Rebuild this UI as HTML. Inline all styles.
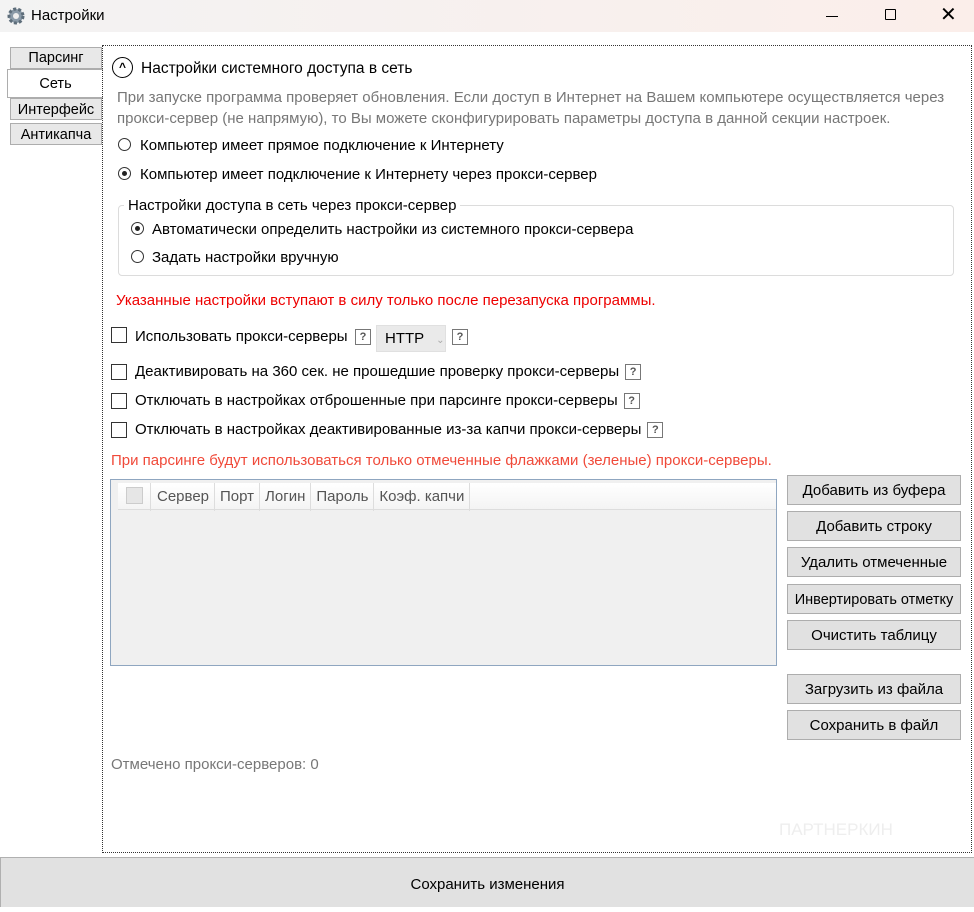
<!DOCTYPE html>
<html><head><meta charset="utf-8"><style>
*{box-sizing:border-box;margin:0;padding:0}
body{width:974px;height:907px;position:relative;background:#fff;font-family:"Liberation Sans","DejaVu Sans",sans-serif;font-size:15px;color:#000;overflow:hidden}
.a{position:absolute;white-space:nowrap}
.title{left:0;top:0;width:974px;height:32px;background:linear-gradient(90deg,#f3f3f3,#fbeeea)}
.tab{position:absolute;left:10px;width:92px;height:22px;border:1px solid #adadad;background:#e8e8e8;text-align:center;line-height:20px;font-size:14.5px}
.frame{left:102px;top:45px;width:870px;height:808px;border:1px dotted #333}
.rad{position:absolute;width:13px;height:13px;border:1px solid #333;border-radius:50%;background:#fff}
.rad.on::after{content:"";position:absolute;left:3px;top:3px;width:5px;height:5px;border-radius:50%;background:#222}
.cb{position:absolute;width:16px;height:16px;border:1px solid #333;background:#fff}
.q{display:inline-block;vertical-align:middle;margin-left:6px;width:16px;height:16px;border:1px solid #777;font-size:11px;font-weight:bold;color:#555;text-align:center;line-height:14px}
.btn{position:absolute;left:787px;width:174px;height:30px;border:1px solid #adadad;background:#e1e1e1;text-align:center;line-height:30px;font-size:15px}
.gray{color:#777}
.red{color:#e00}
</style></head><body>
<div class="a title"></div>
<svg class="a" style="left:6px;top:6px" width="20" height="20" viewBox="0 0 20 20"><circle cx="10" cy="10" r="7" fill="#8a9aa8" stroke="#5d6d7a" stroke-width="3" stroke-dasharray="3 2"/><circle cx="10" cy="10" r="3" fill="#eee"/></svg>
<div class="a" style="left:31px;top:7px;font-size:15px">Настройки</div>
<div class="a" style="left:826px;top:16px;width:12px;height:1px;background:#000"></div>
<div class="a" style="left:885px;top:9px;width:11px;height:11px;border:1.5px solid #000;border-radius:1px"></div>
<div class="a" style="left:940px;top:2px;font-size:20px">✕</div>

<div class="tab" style="top:47px">Парсинг</div>
<div class="tab" style="top:69px;left:7px;width:96px;height:29px;background:#fff;line-height:29px;border-right:none">Сеть</div>
<div class="tab" style="top:98px;line-height:22px">Интерфейс</div>
<div class="tab" style="top:123px;line-height:22px">Антикапча</div>
<div class="a frame"></div>

<div class="a" style="left:112px;top:57px;width:21px;height:21px;border:1.5px solid #000;border-radius:50%;text-align:center;font-size:12px;line-height:18px;font-weight:bold">^</div>
<div class="a" style="left:141px;top:60px;font-size:15.5px">Настройки системного доступа в сеть</div>
<div class="a gray" style="left:117px;top:87px;line-height:21px;font-size:15px">При запуске программа проверяет обновления. Если доступ в Интернет на Вашем компьютере осуществляется через<br>прокси-сервер (не напрямую), то Вы можете сконфигурировать параметры доступа в данной секции настроек.</div>
<div class="rad" style="left:118px;top:138px"></div>
<div class="a" style="left:140px;top:137px">Компьютер имеет прямое подключение к Интернету</div>
<div class="rad on" style="left:118px;top:167px"></div>
<div class="a" style="left:140px;top:166px">Компьютер имеет подключение к Интернету через прокси-сервер</div>
<div class="a" style="left:118px;top:205px;width:836px;height:71px;border:1px solid #dcdcdc;border-radius:4px"></div>
<div class="a" style="left:124px;top:197px;background:#fff;padding:0 4px">Настройки доступа в сеть через прокси-сервер</div>
<div class="rad on" style="left:131px;top:222px"></div>
<div class="a" style="left:152px;top:221px">Автоматически определить настройки из системного прокси-сервера</div>
<div class="rad" style="left:131px;top:250px"></div>
<div class="a" style="left:152px;top:249px">Задать настройки вручную</div>
<div class="a red" style="left:116px;top:292px">Указанные настройки вступают в силу только после перезапуска программы.</div>

<div class="cb" style="left:111px;top:327px"></div>
<div class="a" style="left:135px;top:328px">Использовать прокси-серверы</div>
<div class="a" style="left:349px;top:328px"><span class="q">?</span></div>
<div class="a" style="left:376px;top:325px;width:70px;height:27px;background:#eaeaea;border:1px solid #e0e0e0;padding-left:8px;line-height:26px">HTTP <span style="color:#aaa;font-size:10px;margin-left:8px">⌄</span></div>
<div class="a" style="left:446px;top:328px"><span class="q">?</span></div>
<div class="cb" style="left:111px;top:364px"></div>
<div class="a" style="left:135px;top:363px">Деактивировать на 360 сек. не прошедшие проверку прокси-серверы<span class="q">?</span></div>
<div class="cb" style="left:111px;top:393px"></div>
<div class="a" style="left:135px;top:392px">Отключать в настройках отброшенные при парсинге прокси-серверы<span class="q">?</span></div>
<div class="cb" style="left:111px;top:422px"></div>
<div class="a" style="left:135px;top:421px">Отключать в настройках деактивированные из-за капчи прокси-серверы<span class="q">?</span></div>
<div class="a" style="left:111px;top:452px;color:#f04a3a">При парсинге будут использоваться только отмеченные флажками (зеленые) прокси-серверы.</div>

<div class="a" style="left:110px;top:479px;width:667px;height:187px;border:1px solid #8fa6c0;background:#f0f0f0"></div>
<div class="a" style="left:118px;top:483px;width:658px;height:27px;background:linear-gradient(#fff,#f4f4f4);border-bottom:1px solid #ddd"></div>
<div class="a" style="left:126px;top:487px;width:17px;height:17px;background:#e6e6e6;border:1px solid #ccc"></div>
<div class="a gray" style="left:150px;top:483px;height:27px;line-height:28px;color:#555">
<span style="display:inline-block;border-left:1px solid #ddd;padding:0 5px 0 6px">Сервер</span><span style="display:inline-block;border-left:1px solid #ddd;padding:0 5px">Порт</span><span style="display:inline-block;border-left:1px solid #ddd;padding:0 5px">Логин</span><span style="display:inline-block;border-left:1px solid #ddd;padding:0 5px">Пароль</span><span style="display:inline-block;border-left:1px solid #ddd;border-right:1px solid #ddd;padding:0 5px">Коэф. капчи</span></div>

<div class="btn" style="top:475px">Добавить из буфера</div>
<div class="btn" style="top:511px">Добавить строку</div>
<div class="btn" style="top:547px">Удалить отмеченные</div>
<div class="btn" style="top:584px;font-size:14.5px">Инвертировать отметку</div>
<div class="btn" style="top:620px">Очистить таблицу</div>
<div class="btn" style="top:674px">Загрузить из файла</div>
<div class="btn" style="top:710px">Сохранить в файл</div>
<div class="a gray" style="left:111px;top:756px">Отмечено прокси-серверов: 0</div>
<div class="a" style="left:779px;top:820px;color:#eee;font-size:17px">ПАРТНЕРКИН</div>

<div class="a" style="left:0;top:857px;width:974px;height:50px;background:#e1e1e1;border-top:1px solid #b0b0b0;border-left:1px solid #b0b0b0;text-align:center;line-height:54px;font-size:15px">Сохранить изменения</div>
</body></html>
